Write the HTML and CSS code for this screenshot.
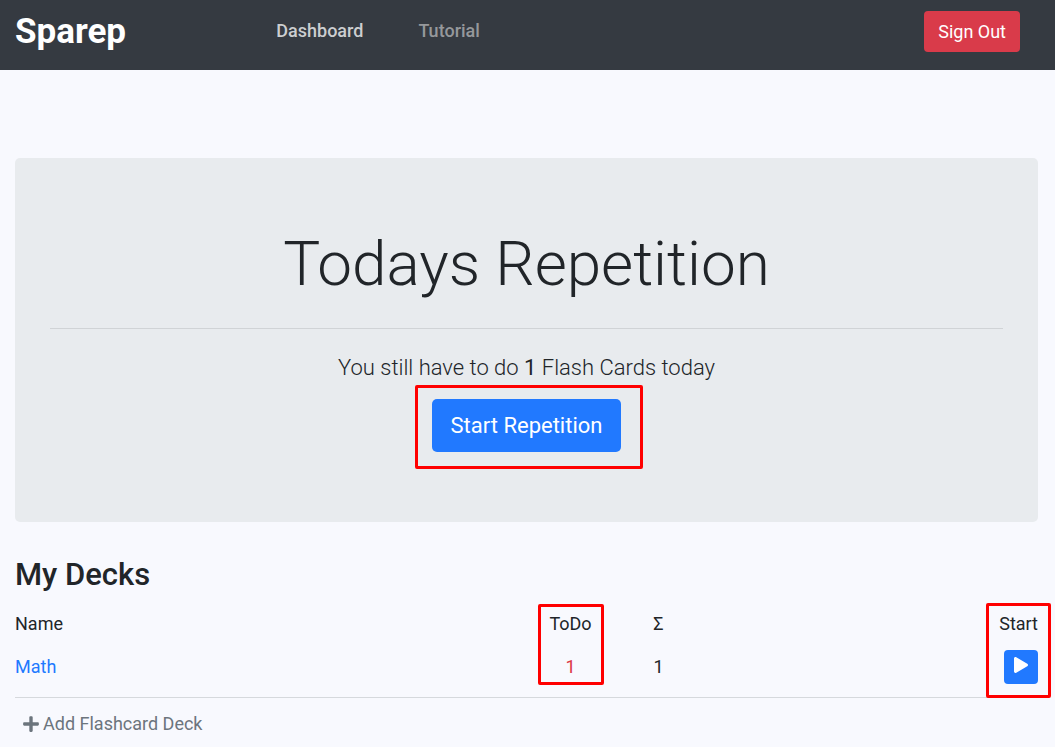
FILE: index.html
```html
<!DOCTYPE html>
<html lang="en">
<head>
<meta charset="utf-8">
<meta name="viewport" content="width=device-width, initial-scale=1">
<title>Sparep</title>
<link rel="stylesheet" href="styles.css">
</head>
<body>
<header class="navbar">
  <a class="brand" href="#">Sparep</a>
  <nav class="nav">
    <a class="nav-link active" href="#">Dashboard</a>
    <a class="nav-link" href="#">Tutorial</a>
  </nav>
  <button class="btn btn-danger" type="button">Sign Out</button>
</header>
<main class="page">
  <section class="jumbotron">
    <h1 class="display">Todays Repetition</h1>
    <hr class="rule">
    <p class="lead">You still have to do <b class="count">1</b> Flash Cards today</p>
    <div class="marked">
      <button class="btn btn-primary btn-lg" type="button">Start Repetition</button>
      <span class="mark mark-repetition"></span>
    </div>
  </section>
  <section class="decks">
    <h2 class="title">My Decks</h2>
    <table class="deck-table">
      <thead>
        <tr>
          <th class="col-name">Name</th>
          <th class="col-num"><div class="marked">ToDo<span class="mark mark-todo"></span></div></th>
          <th class="col-num">Σ</th>
          <th class="col-start"><div class="marked">Start<span class="mark mark-start"></span></div></th>
        </tr>
      </thead>
      <tbody>
        <tr>
          <td><a class="deck-link" href="#">Math</a></td>
          <td class="col-num due">1</td>
          <td class="col-num">1</td>
          <td class="col-start">
            <button class="btn btn-primary btn-play" type="button" aria-label="Start Math">
              <svg class="play-icon" viewBox="0 0 448 512" aria-hidden="true"><path fill="currentColor" d="M424.400 214.700L72.400 6.600C43.800-10.300 0 6.100 0 47.900V464c0 37.500 40.700 60.100 72.400 41.300l352-208c31.400-18.500 31.500-64.100 0-82.600z"/></svg>
            </button>
          </td>
        </tr>
      </tbody>
    </table>
    <button class="btn btn-add" type="button">
      <svg class="plus-icon" viewBox="0 0 448 512" aria-hidden="true"><path fill="currentColor" d="M416 208H272V64c0-17.700-14.300-32-32-32h-32c-17.700 0-32 14.300-32 32v144H32c-17.700 0-32 14.300-32 32v32c0 17.700 14.300 32 32 32h144v144c0 17.700 14.300 32 32 32h32c17.700 0 32-14.300 32-32V304h144c17.700 0 32-14.300 32-32v-32c0-17.700-14.300-32-32-32z"/></svg>
      Add Flashcard Deck
    </button>
  </section>
</main>
</body>
</html>
```
FILE: styles.css
```css
* { box-sizing: border-box; }
body {
  margin: 0;
  background: #f8f9fe;
  color: #212529;
  font-family: Roboto, "Liberation Sans", sans-serif;
  font-size: 18px;
  line-height: 26px;
}
a { text-decoration: none; }
.navbar {
  display: flex;
  align-items: flex-start;
  height: 70px;
  padding: 11px 35px 0 15px;
  background: #353a41;
}
.brand {
  width: 26%;
  color: #fff;
  font-size: 35px;
  font-weight: 700;
  line-height: 42px;
}
.nav { display: flex; flex: 1; gap: 55px; padding-top: 7px; }
.nav-link { color: #96989b; font-weight: 500; }
.nav-link.active { color: #ccced0; }
.btn {
  border: 0;
  border-radius: 4px;
  font: inherit;
  cursor: pointer;
}
.btn-danger { height: 41px; padding: 0 14px; background: #d93b4a; color: #fff; }
.btn-primary { background: #2179ff; color: #fff; }
.btn-lg { height: 53px; padding: 0 19px; border-radius: 5px; font-size: 22px; }
.page { padding: 88px 17px 0 15px; }
.jumbotron {
  padding: 70px 35px;
  border-radius: 5px;
  background: #e8ebee;
  text-align: center;
}
.display {
  margin: 0 0 28px;
  font-size: 62px;
  font-weight: 300;
  line-height: 72px;
}
.rule { margin: 0 0 22px; border: 0; border-top: 1px solid #d0d3d6; }
.lead { margin: 0 0 15px; font-size: 22px; font-weight: 300; line-height: 33px; }
.count { font-weight: bolder; }
.marked { position: relative; display: inline-block; vertical-align: top; }
.mark {
  position: absolute;
  border: 3px solid #f00;
  border-radius: 2px;
  pointer-events: none;
}
.mark-repetition { inset: -14px -22px -17px -17px; }
.mark-todo { top: -7px; bottom: -48px; left: -11px; right: -12px; }
.mark-start { top: -8px; bottom: -61px; left: -13px; right: -13px; }
.title { margin: 34px 0 18px; font-size: 31px; font-weight: 500; line-height: 37px; }
.deck-table { width: 100%; table-layout: fixed; border-collapse: collapse; border-bottom: 1px solid #d6d9dd; }
.deck-table th { height: 30px; padding: 0; font-weight: 400; text-align: left; vertical-align: top; }
.deck-table td { height: 56px; padding: 0 0 4px; }
.deck-table .col-name { width: 50%; }
.deck-table .col-num { width: 8.6%; text-align: center; }
.deck-table .col-start { text-align: right; }
.deck-link { color: #2179ff; }
.due { color: #dc3545; }
.btn-play {
  display: inline-flex;
  align-items: center;
  justify-content: center;
  width: 34px;
  height: 34px;
  padding: 0 0 3px;
  vertical-align: middle;
}
.play-icon { width: 14px; height: 16px; }
.btn-add {
  display: flex;
  align-items: center;
  gap: 4px;
  padding: 13px 8px 8px;
  background: none;
  color: #6c757d;
}
.plus-icon { width: 16px; height: 18px; }
```
